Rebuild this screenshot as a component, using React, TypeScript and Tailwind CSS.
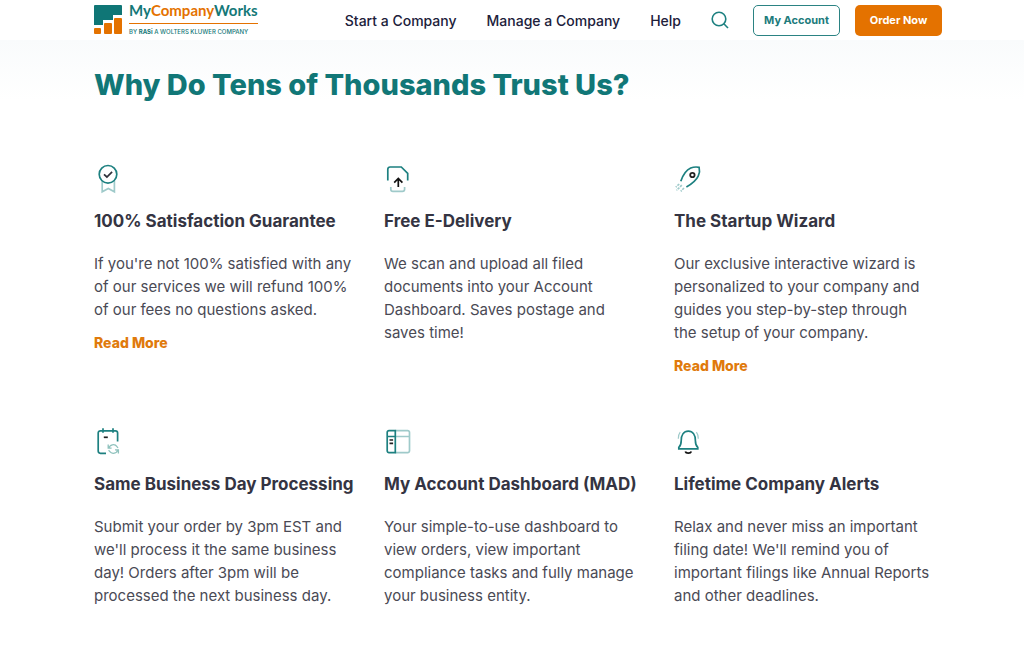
import type { ReactNode } from 'react'

interface Feature {
  title: string
  text: string
  icon: ReactNode
  readMore?: boolean
}

const navLinks = ['Start a Company', 'Manage a Company', 'Help']

const iconProps = {
  className: 'h-8 w-8',
  viewBox: '0 0 32 32',
  fill: 'none',
  strokeWidth: 1.7,
  'aria-hidden': true,
}

function BadgeIcon() {
  return (
    <svg {...iconProps}>
      <path d="M8.2 18v10.8l6.1-3.4 6.1 3.4V18" stroke="#9fcaca" />
      <circle cx="14" cy="11.3" r="8.8" fill="white" stroke="#1d8080" />
      <path d="m10 11.4 2.9 2.6 5.2-5.1" stroke="#30303a" />
    </svg>
  )
}

function UploadIcon() {
  return (
    <svg {...iconProps}>
      <path d="M3.8 17.5V6.2a2.2 2.2 0 0 1 2.2-2.2h11.3l6.4 6.4v7" stroke="#1d8080" />
      <path d="M6.8 24v2.2a2.2 2.2 0 0 0 2.2 2.2h9.4a2.2 2.2 0 0 0 2.2-2.2V24" stroke="#9fcaca" />
      <path d="M14.3 24v-8.3M10.2 19.6l4.1-4.1 4.1 4.1" stroke="#111111" />
    </svg>
  )
}

function RocketIcon() {
  return (
    <svg {...iconProps}>
      <path d="M6.8 18.2C9 12 12.5 7 16.7 5.1c2.8-1.2 6-1.3 8.4-.8.7 2.6.5 6-.9 8.9-1.9 4.1-6.4 7.8-11.8 10.9" stroke="#1d8080" />
      <circle cx="18.4" cy="12" r="2.2" stroke="#222222" strokeWidth="1.8" />
      <path d="m5.2 21-3.4 3.2M7.8 22.2l-5.3 5.2M10 25l-3.2 3.3" stroke="#9fcaca" strokeDasharray="2.4 1" />
    </svg>
  )
}

function CalendarIcon() {
  return (
    <svg {...iconProps}>
      <path d="M12 27.3H6.4a2.2 2.2 0 0 1-2.2-2.2V7a2.2 2.2 0 0 1 2.2-2.2h15A2.2 2.2 0 0 1 23.6 7v8.5" stroke="#1d8080" />
      <path d="M9 2.2v4.6M19 2.2v4.6" stroke="#1d8080" />
      <path d="M9.8 11.3h4" stroke="#222222" />
      <path d="M14.8 22.4a4.6 4.6 0 0 1 8.2-1.8l1 1.2M14.2 18.6v3.6h3.4M23.8 23.6a4.6 4.6 0 0 1-8.2 1.8l-1-1.2M24.4 27.4v-3.6H21" stroke="#8fc2bd" strokeWidth="1.3" />
    </svg>
  )
}

function DashboardIcon() {
  return (
    <svg {...iconProps}>
      <path d="M11.5 4.6h12.2a1.8 1.8 0 0 1 1.8 1.8v18.4a1.8 1.8 0 0 1-1.8 1.8H11.5M11.5 10.5h14" stroke="#9fcaca" />
      <path d="M11.3 4.6H5a1.8 1.8 0 0 0-1.8 1.8v18.4A1.8 1.8 0 0 0 5 26.6h6.3zM3.2 10.5h8.1" stroke="#1d8080" />
      <path d="M5.5 14h3.6M5.5 17.3h3.6" stroke="#222222" />
    </svg>
  )
}

function BellIcon() {
  return (
    <svg {...iconProps}>
      <path d="M4.8 22.8v-1.4c1.8-1.6 2.4-3.5 2.4-6.6 0-5.8 2.6-9.6 7.1-9.6s7.1 3.8 7.1 9.6c0 3.1.6 5 2.4 6.6v1.4z" stroke="#1d8080" />
      <path d="M6.2 6.2c-1.4 1.8-1.9 3.8-1.9 6.6M22.4 6.2c1.4 1.8 1.9 3.8 1.9 6.6" stroke="#9fcaca" strokeWidth="1.2" />
      <path d="M11.3 25.4c.7 2.3 5.3 2.3 6 0" stroke="#111111" strokeWidth="1.8" />
    </svg>
  )
}

const features: Feature[] = [
  {
    title: '100% Satisfaction Guarantee',
    text: "If you're not 100% satisfied with any of our services we will refund 100% of our fees no questions asked.",
    icon: <BadgeIcon />,
    readMore: true,
  },
  {
    title: 'Free E-Delivery',
    text: 'We scan and upload all filed documents into your Account Dashboard. Saves postage and saves time!',
    icon: <UploadIcon />,
  },
  {
    title: 'The Startup Wizard',
    text: 'Our exclusive interactive wizard is personalized to your company and guides you step-by-step through the setup of your company.',
    icon: <RocketIcon />,
    readMore: true,
  },
  {
    title: 'Same Business Day Processing',
    text: "Submit your order by 3pm EST and we'll process it the same business day! Orders after 3pm will be processed the next business day.",
    icon: <CalendarIcon />,
  },
  {
    title: 'My Account Dashboard (MAD)',
    text: 'Your simple-to-use dashboard to view orders, view important compliance tasks and fully manage your business entity.',
    icon: <DashboardIcon />,
  },
  {
    title: 'Lifetime Company Alerts',
    text: "Relax and never miss an important filing date! We'll remind you of important filings like Annual Reports and other deadlines.",
    icon: <BellIcon />,
  },
]

function Logo() {
  return (
    <a href="#" className="flex items-start gap-[7px] self-start pt-[3px]">
      <svg className="mt-0.5 h-[29px] w-7" viewBox="0 0 28 29" aria-hidden="true">
        <path d="M1 0h26a1 1 0 0 1 1 1v9h-9v5H9v5H0V1a1 1 0 0 1 1-1z" fill="#0f7676" />
        <rect y="23" width="7" height="6" rx="1" fill="#e47200" />
        <rect x="10" y="18" width="8" height="11" rx="1" fill="#e47200" />
        <rect x="20" y="13" width="8" height="16" rx="1" fill="#e47200" />
      </svg>
      <span className="flex flex-col text-[#147878]">
        <span className="border-b border-[#e47200] pb-1.5 font-[Lato,sans-serif] text-[15px] leading-[14px] font-bold">
          My<span className="text-[#e47200]">Company</span>Works
        </span>
        <span className="mt-1 text-[6px] leading-2 font-medium whitespace-nowrap">
          BY <b>RASi</b> A WOLTERS KLUWER COMPANY
        </span>
      </span>
    </a>
  )
}

function Header() {
  return (
    <header className="bg-white">
      <div className="mx-auto flex h-10 max-w-5xl items-center justify-between pr-[82px] pl-[94px]">
        <Logo />
        <div className="flex items-center">
          <nav className="flex gap-[30px] text-[14px] font-medium text-[#20203a]">
            {navLinks.map((link) => (
              <a key={link} href="#">
                {link}
              </a>
            ))}
          </nav>
          <button type="button" aria-label="Search" className="ml-[30px]">
            <svg className="h-[18px] w-[18px]" viewBox="0 0 18 18" fill="none" stroke="#1d8080" strokeWidth="1.6" aria-hidden="true">
              <circle cx="8" cy="8" r="6.8" />
              <path d="m12.8 12.8 4.2 4.2" />
            </svg>
          </button>
          <button
            type="button"
            className="ml-6 h-[31px] w-[87px] rounded-[5px] border-[1.5px] border-[#2b8383] text-[11px] font-bold text-[#207b7b]"
          >
            My Account
          </button>
          <button type="button" className="ml-[15px] h-[31px] w-[87px] rounded-[5px] bg-[#e47200] text-[11px] font-bold text-white">
            Order Now
          </button>
        </div>
      </div>
    </header>
  )
}

function FeatureCard({ title, text, icon, readMore }: Feature) {
  return (
    <article className="pr-2.5">
      {icon}
      <h2 className="mt-3.5 text-[17px] leading-6 font-bold whitespace-nowrap text-[#343442]">{title}</h2>
      <p className="mt-[19px] text-[15px] leading-[23px] text-[#4a4a55]">{text}</p>
      {readMore && (
        <a href="#" className="mt-2.5 block text-[14px] leading-[23px] font-extrabold text-[#e07a0c]">
          Read More
        </a>
      )}
    </article>
  )
}

export default function App() {
  return (
    <div className="min-h-screen bg-white font-[Inter,sans-serif]">
      <Header />
      <main className="bg-linear-to-b from-[#f9fbfc] to-white to-10%">
        <div className="mx-auto max-w-5xl pt-[26px] pr-[82px] pb-10 pl-[94px]">
          <h1 className="text-[29px] leading-[38px] font-extrabold text-[#117777]">Why Do Tens of Thousands Trust Us?</h1>
          <div className="mt-[59px] grid grid-cols-3 gap-x-[22px] gap-y-[49px]">
            {features.map((feature) => (
              <FeatureCard key={feature.title} {...feature} />
            ))}
          </div>
        </div>
      </main>
    </div>
  )
}
